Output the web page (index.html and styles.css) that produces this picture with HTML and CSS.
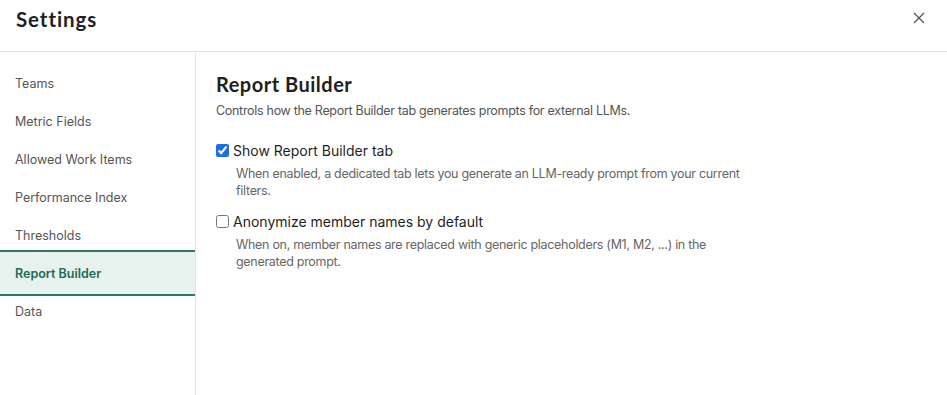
FILE: index.html
```html
<!DOCTYPE html>
<html lang="en">
<head>
    <meta charset="UTF-8">
    <meta name="viewport" content="width=device-width, initial-scale=1.0">
    <title>Settings</title>
    <link rel="stylesheet" href="styles.css">
</head>
<body>
    <div class="modal">
        <div class="baslik">
            <h2>Settings</h2>
            <button type="button" class="kapat" aria-label="Close">
                <svg width="12" height="12" viewBox="0 0 12 12"><path d="M1 1L11 11M11 1L1 11" stroke="#555" stroke-width="1.3" fill="none"/></svg>
            </button>
        </div>
        <div class="govde">
            <nav class="menu">
                <a class="menu-item">Teams</a>
                <a class="menu-item">Metric Fields</a>
                <a class="menu-item">Allowed Work Items</a>
                <a class="menu-item">Performance Index</a>
                <a class="menu-item">Thresholds</a>
                <a class="menu-item aktif">Report Builder</a>
                <a class="menu-item">Data</a>
            </nav>
            <div class="icerik">
                <h3>Report Builder</h3>
                <p class="aciklama">Controls how the Report Builder tab generates prompts for external LLMs.</p>

                <div class="secenek">
                    <label><input type="checkbox" checked> Show Report Builder tab</label>
                    <p class="not">When enabled, a dedicated tab lets you generate an LLM-ready prompt from your current filters.</p>
                </div>
                <div class="secenek">
                    <label><input type="checkbox"> Anonymize member names by default</label>
                    <p class="not">When on, member names are replaced with generic placeholders (M1, M2, ...) in the generated prompt.</p>
                </div>
            </div>
        </div>
    </div>
</body>
</html>
```

FILE: styles.css
```css
*{
    margin: 0;
    padding: 0;
    box-sizing: border-box;
}
body{
    background-color: #fff;
    font-family: Inter, "Noto Sans", sans-serif;
    color: #222;
}
.modal{
    width: 947px;
    height: 395px;
    display: flex;
    flex-direction: column;
}
.baslik{
    height: 52px;
    display: flex;
    align-items: center;
    justify-content: space-between;
    padding: 0 22px 0 16px;
    border-bottom: 1px solid #e4e4e4;
}
.baslik h2{
    font-family: Lato, Inter, sans-serif;
    font-size: 20.5px;
    font-weight: 700;
    color: #1f1f1f;
    letter-spacing: 0.9px;
    margin-top: -14px;
}
.kapat{
    background: none;
    border: none;
    width: 12px;
    height: 12px;
    margin-top: -16px;
    display: flex;
}
.govde{
    flex: 1;
    display: flex;
}
.menu{
    width: 196px;
    border-right: 1px solid #e4e4e4;
    padding-top: 12px;
    display: flex;
    flex-direction: column;
}
.menu-item{
    height: 38px;
    display: flex;
    align-items: center;
    padding-left: 15px;
    font-size: 12.5px;
    color: #555;
}
.menu-item.aktif{
    height: 46px;
    margin: -4px 0;
    background-color: #e7f2ef;
    border-top: 2px solid #2e7766;
    border-bottom: 2px solid #2e7766;
    color: #1d6b58;
    font-weight: 600;
}
.icerik{
    padding: 20px 20px 0 20px;
}
.icerik h3{
    font-family: Lato, Inter, sans-serif;
    font-size: 20px;
    font-weight: 700;
    color: #1f1f1f;
    letter-spacing: 0.5px;
}
.aciklama{
    font-size: 12.5px;
    letter-spacing: -0.3px;
    color: #555;
    margin-top: 7px;
}
.secenek{
    margin-top: 24px;
}
.secenek + .secenek{
    margin-top: 14px;
}
.secenek label{
    display: flex;
    align-items: center;
    gap: 4px;
    font-size: 14px;
    color: #1f1f1f;
}
.secenek input{
    width: 13px;
    height: 13px;
    margin: 0;
    accent-color: #1f6fe0;
}
.not{
    font-size: 12.5px;
    letter-spacing: -0.3px;
    color: #666;
    line-height: 17px;
    margin-top: 6px;
    padding-left: 20px;
    width: 540px;
}
```
